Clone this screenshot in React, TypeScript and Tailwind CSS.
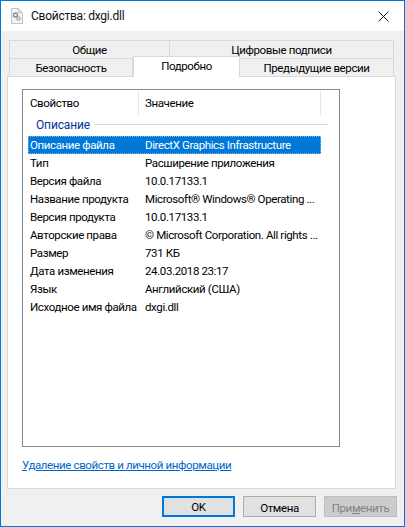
const rows = [
  ['Описание файла', 'DirectX Graphics Infrastructure'],
  ['Тип', 'Расширение приложения'],
  ['Версия файла', '10.0.17133.1'],
  ['Название продукта', 'Microsoft® Windows® Operating ...'],
  ['Версия продукта', '10.0.17133.1'],
  ['Авторские права', '© Microsoft Corporation. All rights ...'],
  ['Размер', '731 КБ'],
  ['Дата изменения', '24.03.2018 23:17'],
  ['Язык', 'Английский (США)'],
  ['Исходное имя файла', 'dxgi.dll'],
]

function FileIcon() {
  return (
    <svg width="12" height="16" viewBox="0 0 12 16" className="shrink-0">
      <path d="M.5.5h7l4 4v11H.5z" fill="#f4f4f4" stroke="#c4c4c4" />
      <path d="M7.5.5v4h4" fill="#e4e4e4" stroke="#c4c4c4" />
      <circle cx="4.5" cy="7" r="2" fill="none" stroke="#8c8c8c" strokeWidth="1.4" />
      <circle cx="7.5" cy="10.5" r="1.6" fill="none" stroke="#a8a8a8" strokeWidth="1.3" />
    </svg>
  )
}

function CloseIcon() {
  return (
    <svg width="11" height="11" viewBox="0 0 11 11" fill="none" stroke="#1a1a1a" strokeWidth="1">
      <path d="M.5.5l10 10M10.5.5l-10 10" />
    </svg>
  )
}

export default function App() {
  return (
    <div className="w-[405px] h-[527px] flex flex-col overflow-hidden border border-[#0078d7] bg-[#f0f0f0] text-[11.5px] tracking-[-0.38px] leading-[16px] text-[#000] font-['Roboto','Liberation_Sans',sans-serif]">
      {/* Title bar */}
      <div className="h-[30px] shrink-0 bg-white flex items-center pl-[10px] pr-[15px]">
        <FileIcon />
        <span className="ml-[8px] text-[12px] tracking-[-0.25px] text-[#111]">Свойства: dxgi.dll</span>
        <div className="ml-auto flex">
          <CloseIcon />
        </div>
      </div>

      {/* Tabs */}
      <div className="pt-[9px] px-[6px] flex-1 flex flex-col">
        <div className="h-[18px] ml-[2px] flex w-[385px] text-center">
          <div className="w-[161px] bg-[#f0f0f0] border border-b-0 border-[#d9d9d9] pt-[1px]">Общие</div>
          <div className="flex-1 bg-[#f0f0f0] border border-l-0 border-b-0 border-[#d9d9d9] pt-[1px]">Цифровые подписи</div>
        </div>
        <div className="h-[18px] ml-[2px] flex w-[385px] text-center relative z-10">
          <div className="w-[124px] bg-[#f0f0f0] border border-b-0 border-[#d9d9d9] pt-[1px]">Безопасность</div>
          <div className="w-[107px] h-[21px] -mt-[2px] bg-white border border-b-0 border-[#d9d9d9] pt-[1px]">Подробно</div>
          <div className="flex-1 bg-[#f0f0f0] border border-l-0 border-b-0 border-[#d9d9d9] pt-[1px]">Предыдущие версии</div>
        </div>

        {/* Page */}
        <div className="h-[413px] w-[389px] bg-white border border-[#d9d9d9] pt-[12px] pl-[14px]">
          <div className="w-[318px] h-[358px] border border-[#828790] bg-white">
            <div className="h-[24px] mt-[1px] flex">
              <div className="w-[116px] pl-[7px] flex items-center border-r border-[#e5e5e5]">Свойство</div>
              <div className="w-[182px] pl-[6px] flex items-center border-r border-[#e5e5e5]">Значение</div>
            </div>
            <div className="h-[19px] pl-[13px] flex items-center text-[#003399]">
              <span className="w-[55px] pt-[1px] text-[12px] tracking-[-0.15px] whitespace-nowrap">Описание</span>
              <div className="ml-[4px] w-[233px] h-px bg-[#c6dcec]" />
            </div>
            <div className="flex flex-col mt-[2px]">
              {rows.map(([name, value], i) => (
                <div
                  key={name}
                  className={
                    i === 0
                      ? 'w-[293px] h-[18px] ml-[5px] flex items-center bg-[#0078d7] text-white outline-1 -outline-offset-1 outline-dotted outline-[#7fbbeb]'
                      : 'w-[293px] h-[18px] ml-[5px] flex items-center'
                  }
                >
                  <span className="w-[117px] pl-[2px] shrink-0 whitespace-nowrap">{name}</span>
                  <span className="whitespace-nowrap">{value}</span>
                </div>
              ))}
            </div>
          </div>
          <a className="block mt-[10px] text-[#0066cc] underline whitespace-nowrap">
            Удаление свойств и личной информации
          </a>
        </div>

        {/* Buttons */}
        <div className="flex justify-end gap-[8px] mt-[7px] mr-[1px]">
          <button className="w-[73px] h-[21px] pt-[1px] bg-[#e1e1e1] border-2 border-[#0078d7]">OK</button>
          <button className="w-[73px] h-[21px] pt-[2px] bg-[#e1e1e1] border border-[#adadad]">Отмена</button>
          <button className="w-[73px] h-[21px] pt-[2px] bg-[#cccccc] border border-[#bfbfbf] text-[#838383]">
            При<span className="underline">м</span>енить
          </button>
        </div>
      </div>
    </div>
  )
}
